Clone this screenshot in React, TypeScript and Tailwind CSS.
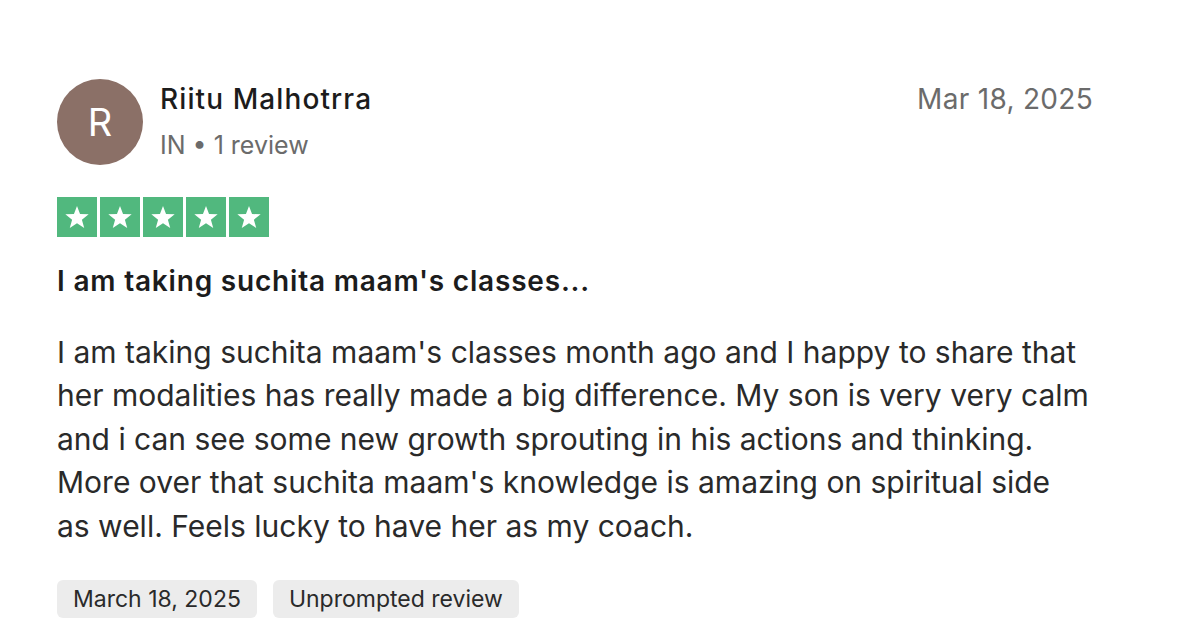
import React from 'react';

function Star() {
  return (
    <div className="w-[40px] h-[40px] bg-[#51b87e] flex items-center justify-center">
      <svg viewBox="0 0 24 24" className="w-[28px] h-[28px]" fill="white">
        <path d="M12 2.5l2.6 6.9 7.4.3-5.8 4.6 2 7.1L12 17.3l-6.2 4.1 2-7.1L2 9.7l7.4-.3z" />
      </svg>
    </div>
  );
}

export default function App() {
  return (
    <div className="min-h-screen bg-white text-[#1c1c1c]" style={{ fontFamily: 'Inter, "Noto Sans", sans-serif' }}>
      <div className="pl-[57px] pr-[107px] pt-[79px]">
        {/* Header: avatar, name, date */}
        <div className="flex items-start justify-between">
          <div className="flex items-center gap-[17px]">
            <div className="w-[86px] h-[86px] rounded-full bg-[#8b7067] flex items-center justify-center text-white text-[38px]">
              R
            </div>
            <div className="flex flex-col">
              <span className="text-[28px] font-medium leading-[40px] tracking-[1.1px]">Riitu Malhotrra</span>
              <span className="text-[25px] text-[#6b6b6b] leading-[40px] mt-[6px]">IN • 1 review</span>
            </div>
          </div>
          <span className="text-[28px] text-[#6b6b6b] leading-[40px] tracking-[0.3px]">Mar 18, 2025</span>
        </div>

        {/* Rating */}
        <div className="flex gap-[3px] mt-[32px]">
          <Star />
          <Star />
          <Star />
          <Star />
          <Star />
        </div>

        {/* Title */}
        <h2 className="mt-[24px] text-[28px] font-semibold leading-[40px] tracking-[0.8px]">
          I am taking suchita maam's classes...
        </h2>

        {/* Body */}
        <p className="mt-[30px] max-w-[1032px] text-[30px] leading-[43.4px] text-[#2a2a2a]">
          I am taking suchita maam's classes month ago and I happy to share that her modalities has really made a big difference. My son is very very calm and i can see some new growth sprouting in his actions and thinking. More over that suchita maam's knowledge is amazing on spiritual side as well. Feels lucky to have her as my coach.
        </p>

        {/* Tags */}
        <div className="flex gap-[16px] mt-[32px]">
          <span className="h-[38px] px-[16px] rounded-[6px] bg-[#ececec] text-[23px] text-[#2a2a2a] flex items-center">March 18, 2025</span>
          <span className="h-[38px] px-[16px] rounded-[6px] bg-[#ececec] text-[23px] text-[#2a2a2a] flex items-center">Unprompted review</span>
        </div>
      </div>
    </div>
  );
}
